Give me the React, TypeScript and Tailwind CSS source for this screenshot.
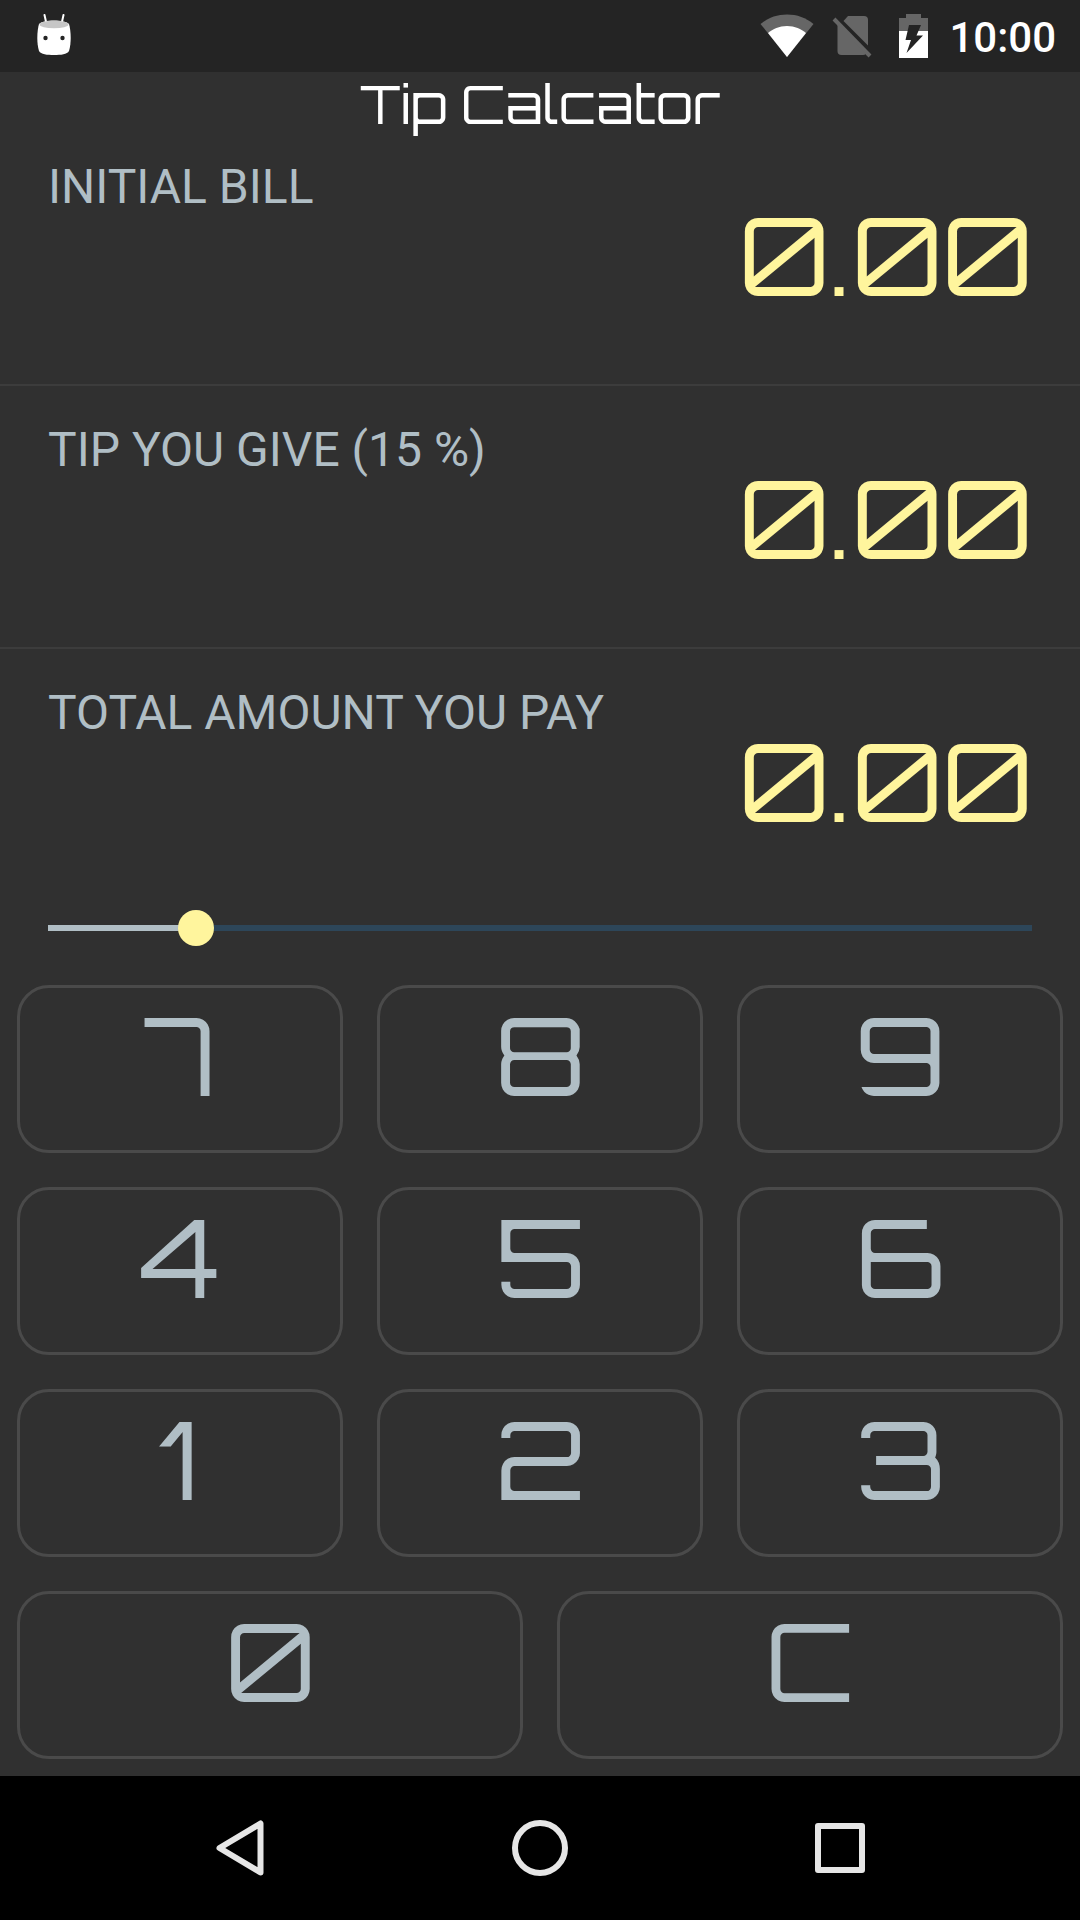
import { useState } from "react";

const digitFont = "font-[Orbitron,Inter,sans-serif] text-[108px] font-normal";

function AndroidHead() {
  return (
    <svg width="36" height="44" viewBox="0 0 36 44" aria-hidden="true">
      <path d="M8.500 1L10.500 10M27.500 1L25.500 10" stroke="#fff" strokeWidth="2" strokeLinecap="round" />
      <path d="M3 10C5 8 11 6.500 18 6.500S31 8 33 10C35 17 35.500 29 33 37C31 40.500 25 41 18 41S5 40.500 3 37C0.500 29 1 17 3 10Z" fill="#fff" />
      <ellipse cx="18" cy="10.500" rx="14.500" ry="3.800" fill="#c6c6c6" />
      <circle cx="9.500" cy="24" r="2.200" fill="#242424" />
      <circle cx="26.500" cy="24" r="2.200" fill="#242424" />
    </svg>
  );
}

function Wifi() {
  return (
    <svg width="54" height="44" viewBox="0 0 54 44" aria-hidden="true">
      <path d="M0.500 10C8 3.800 17 0.500 27 0.500S46 3.800 53.500 10L27 43Z" fill="#666" />
      <path d="M8 19C13 15 19 12 27 12S41 15 46 19L27 43Z" fill="#fff" />
    </svg>
  );
}

function NoSim() {
  return (
    <svg width="40" height="44" viewBox="0 0 40 44" aria-hidden="true">
      <path d="M16 2H32Q36 2 36 6V31.500L11.500 7Z" fill="#666" />
      <path d="M5.500 10L34 39.500Q33 41 31 41H9.500Q5.500 41 5.500 37Z" fill="#666" />
      <path d="M2 5L38 42" stroke="#666" strokeWidth="4" />
    </svg>
  );
}

function Battery() {
  return (
    <svg width="29" height="44" viewBox="0 0 29 44" aria-hidden="true">
      <path d="M7 0H22V4H29V17H0V4H7Z" fill="#666" />
      <path d="M0 17H29V44H0Z" fill="#fff" />
      <path d="M10 11H22L17.500 21.500H24L7.500 39L12 26H6.500Z" fill="#242424" />
    </svg>
  );
}

function Amount({ label, value }: { label: string; value: string }) {
  return (
    <section className="border-b-2 border-[#3c3c3c] px-12 pt-9 pb-[89px] last-of-type:border-b-0">
      <h2 className="text-[48px] leading-[56px] text-[#b0bec5]">{label}</h2>
      <p className={`${digitFont} text-right leading-[80px] text-[#fff59d]`}>{value}</p>
    </section>
  );
}

function Key({ name, wide, onPress }: { name: string; wide?: boolean; onPress: (name: string) => void }) {
  return (
    <button
      type="button"
      onClick={() => onPress(name)}
      className={`${digitFont} flex h-[168px] items-center justify-center rounded-4xl border-3 border-[#4a4a4a] pb-7 leading-none text-[#b0bec5] ${wide ? "col-span-3" : "col-span-2"}`}
    >
      {name}
    </button>
  );
}

export default function App() {
  const [cents, setCents] = useState(0);
  const [percent, setPercent] = useState(15);
  const tip = (cents * percent) / 100;
  const money = (c: number) => (c / 100).toFixed(2);
  const press = (key: string) =>
    setCents((c) => (key === "C" ? 0 : Math.min(c * 10 + Number(key), 99999)));

  return (
    <div className="flex min-h-screen flex-col bg-[#303030] font-[Roboto,sans-serif]">
      <div className="flex h-18 items-center justify-between bg-[#242424] pr-6 pl-9 text-white">
        <AndroidHead />
        <div className="flex items-center">
          <Wifi />
          <span className="ml-[18px]"><NoSim /></span>
          <span className="ml-[27px]"><Battery /></span>
          <time className="ml-[21px] pt-1 text-[42px] leading-[56px] font-medium">10:00</time>
        </div>
      </div>

      <main className="flex-1">
        <h1 className="pt-3 text-center font-[Orbitron,'DejaVu_Sans',sans-serif] text-[54px] leading-[39px] text-white">
          Tip Calcator
        </h1>
        <Amount label="INITIAL BILL" value={money(cents)} />
        <Amount label={`TIP YOU GIVE (${percent} %)`} value={money(tip)} />
        <Amount label="TOTAL AMOUNT YOU PAY" value={money(cents + tip)} />

        <div className="px-[30px] pb-[22px]">
          <input
            type="range"
            min={0}
            max={100}
            value={percent}
            aria-label="Tip percentage"
            onChange={(e) => setPercent(Number(e.target.value))}
            style={{
              backgroundImage: `linear-gradient(to right, #b0bec5 ${percent}%, #2d4659 ${percent}%)`,
            }}
            className="block h-9 w-full appearance-none bg-[length:calc(100%-36px)_6px] bg-center bg-no-repeat [&::-webkit-slider-thumb]:size-9 [&::-webkit-slider-thumb]:appearance-none [&::-webkit-slider-thumb]:rounded-full [&::-webkit-slider-thumb]:bg-[#fff59d]"
          />
        </div>

        <div className="grid grid-cols-6 gap-[34px] p-[17px]">
          {["7", "8", "9", "4", "5", "6", "1", "2", "3"].map((k) => (
            <Key key={k} name={k} onPress={press} />
          ))}
          <Key name="0" wide onPress={press} />
          <Key name="C" wide onPress={press} />
        </div>
      </main>

      <nav className="flex h-36 items-center bg-black px-[90px]">
        <button type="button" aria-label="Back" className="flex flex-1 justify-center">
          <svg width="60" height="60" viewBox="0 0 60 60" fill="none" stroke="#e6e6e6" strokeWidth="6" strokeLinejoin="round">
            <path d="M50.500 5.500V54.500L9.500 30Z" />
          </svg>
        </button>
        <button type="button" aria-label="Home" className="flex flex-1 justify-center">
          <svg width="60" height="60" viewBox="0 0 60 60" fill="none" stroke="#e6e6e6" strokeWidth="6">
            <circle cx="30" cy="30" r="25" />
          </svg>
        </button>
        <button type="button" aria-label="Recent apps" className="flex flex-1 justify-center">
          <svg width="60" height="60" viewBox="0 0 60 60" fill="none" stroke="#e6e6e6" strokeWidth="6" strokeLinejoin="round">
            <rect x="8" y="8" width="44" height="44" />
          </svg>
        </button>
      </nav>
    </div>
  );
}
